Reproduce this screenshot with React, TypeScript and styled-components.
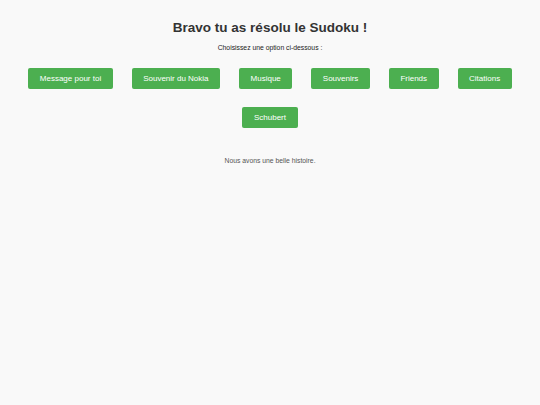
import { createGlobalStyle } from 'styled-components';
import styled from 'styled-components';

const GlobalStyle = createGlobalStyle`
  html, body {
    margin: 0;
    padding: 0;
    background-color: #f9f9f9;
    font-family: "Liberation Sans", Arial, sans-serif;
  }
`;

const Page = styled.div`
  min-height: 405px;
  padding: 20px 10px 0;
  box-sizing: border-box;
  text-align: center;
`;

const Title = styled.h1`
  margin: 0;
  font-size: 13.5px;
  line-height: 16px;
  font-weight: bold;
  color: #333;
`;

const Subtitle = styled.p`
  margin: 8px 0 0;
  font-size: 6.8px;
  line-height: 8px;
  color: #222;
`;

const Options = styled.div`
  display: flex;
  flex-wrap: wrap;
  justify-content: center;
  gap: 18px 19px;
  margin-top: 16px;
`;

const OptionButton = styled.button`
  height: 21px;
  padding: 0 11.5px;
  border: none;
  border-radius: 2px;
  background-color: #4caf50;
  color: #fff;
  font-family: "Liberation Sans", Arial, sans-serif;
  font-size: 8px;
  cursor: pointer;

  &:hover {
    background-color: #45a049;
  }
`;

const Message = styled.p`
  margin: 29px 0 0;
  font-size: 6.8px;
  line-height: 8px;
  color: #555;
`;

const options = [
  'Message pour toi',
  'Souvenir du Nokia',
  'Musique',
  'Souvenirs',
  'Friends',
  'Citations',
  'Schubert',
];

function App() {
  return (
    <Page>
      <GlobalStyle />
      <Title>Bravo tu as résolu le Sudoku !</Title>
      <Subtitle>Choisissez une option ci-dessous :</Subtitle>
      <Options>
        {options.map((label) => (
          <OptionButton key={label}>{label}</OptionButton>
        ))}
      </Options>
      <Message>Nous avons une belle histoire.</Message>
    </Page>
  );
}

export default App;
